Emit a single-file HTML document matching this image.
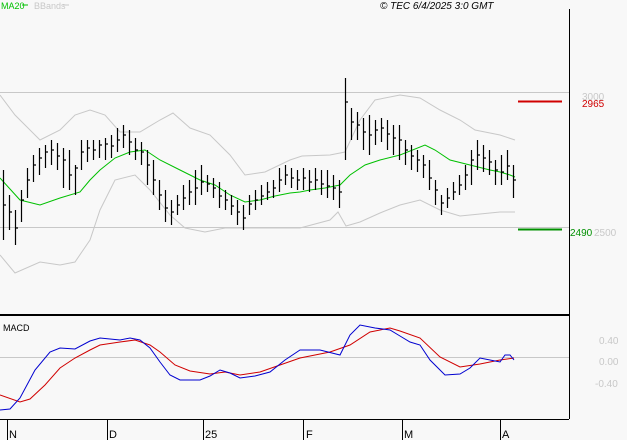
<!DOCTYPE html>
<html><head><meta charset="utf-8"><style>
html,body{margin:0;padding:0;background:#f8f8f8;}
svg{display:block;font-family:"Liberation Sans",sans-serif;}
</style></head><body>
<svg width="627" height="440" viewBox="0 0 627 440" xmlns="http://www.w3.org/2000/svg">
<rect width="627" height="440" fill="#f8f8f8"/>
<text x="1" y="9" font-size="9" fill="#00c000">MA20</text>
<line x1="22" y1="5" x2="28" y2="5" stroke="#00c000"/>
<text x="34" y="9" font-size="9" fill="#c8c8c8">BBands</text>
<line x1="63" y1="5" x2="69" y2="5" stroke="#c8c8c8"/>
<text x="380" y="9" font-size="10" font-style="italic" fill="#000">© TEC 6/4/2025 3:0 GMT</text>
<line x1="0" y1="92.5" x2="569" y2="92.5" stroke="#c8c8c8"/>
<line x1="0" y1="227.5" x2="569" y2="227.5" stroke="#c8c8c8"/>
<line x1="569.5" y1="9" x2="569.5" y2="419" stroke="#000"/>
<line x1="0" y1="315" x2="569" y2="315" stroke="#000" stroke-width="2"/>
<line x1="0" y1="419.5" x2="569" y2="419.5" stroke="#000"/>
<line x1="0" y1="357.5" x2="569" y2="357.5" stroke="#c8c8c8"/>
<line x1="518" y1="101.5" x2="562" y2="101.5" stroke="#d00000" stroke-width="2"/>
<line x1="518" y1="229.5" x2="562" y2="229.5" stroke="#009000" stroke-width="2"/>
<text x="582" y="100" font-size="10" fill="#c8c8c8">3000</text>
<text x="582" y="107" font-size="10" fill="#d00000">2965</text>
<text x="570" y="236" font-size="10" fill="#009000">2490</text>
<text x="594" y="236" font-size="10" fill="#c8c8c8">2500</text>
<text x="599" y="344" font-size="10" fill="#c8c8c8">0.40</text>
<text x="599" y="365" font-size="10" fill="#c8c8c8">0.00</text>
<text x="595" y="387" font-size="10" fill="#c8c8c8">-0.40</text>
<text x="3" y="331" font-size="9" fill="#000">MACD</text>
<g stroke="#000">
<line x1="7.5" y1="419" x2="7.5" y2="440"/><line x1="107.5" y1="419" x2="107.5" y2="440"/>
<line x1="203.5" y1="419" x2="203.5" y2="440"/><line x1="303.5" y1="419" x2="303.5" y2="440"/>
<line x1="402.5" y1="419" x2="402.5" y2="440"/><line x1="500.5" y1="419" x2="500.5" y2="440"/>
</g>
<g font-size="11" fill="#000">
<text x="9" y="438">N</text><text x="109" y="438">D</text><text x="205" y="438">25</text>
<text x="306" y="438">F</text><text x="404" y="438">M</text><text x="502" y="438">A</text>
</g>
<polyline fill="none" stroke="#c8c8c8" points="0,95 15,115 40,140 60,130 75,115 90,110 105,115 120,132 140,132 160,120 173,113 190,128 210,135 230,155 245,175 265,172 290,160 302,156 330,155 345,152 360,120 375,100 400,95 420,98 440,110 460,120 475,130 500,135 515,140"/>
<polyline fill="none" stroke="#c8c8c8" points="0,255 15,273 40,262 60,265 75,262 90,240 100,210 115,180 135,175 150,190 170,215 185,228 205,232 225,228 240,228 270,228 300,228 330,220 338,212 346,226 360,222 380,213 400,205 420,200 440,210 460,216 480,214 500,212 515,212"/>
<polyline fill="none" stroke="#00c000" points="0,178 20,200 40,205 60,198 80,192 90,180 100,170 115,158 130,152 145,150 160,160 180,170 200,180 215,185 230,195 245,202 260,200 275,196 290,193 300,192 310,190 325,188 340,185 350,175 365,165 380,160 400,155 425,145 435,150 450,160 470,165 490,170 500,172 510,175 515,177"/>
<path fill="none" stroke="#000" stroke-width="1.2" d="M3.5 170V240M4 205h2M9.5 195V230M10 212h2M15.5 210V245M16 228h2M21.5 190V222M22 200h2M27.5 168V198M28 180h2M33.5 155V182M34 165h2M39.5 148V175M40 158h2M45.5 145V168M46 152h2M51.5 140V165M52 150h2M57.5 143V170M58 156h2M63.5 148V188M64 160h2M69.5 150V190M70 175h2M75.5 165V195M76 168h2M81.5 140V170M82 152h2M87.5 140V162M88 148h2M93.5 140V160M94 150h2M99.5 140V158M100 145h2M105.5 138V160M106 144h2M111.5 135V158M112 146h2M117.5 128V152M118 140h2M123.5 125V148M124 135h2M129.5 130V155M130 142h2M135.5 138V160M136 150h2M141.5 142V165M142 152h2M147.5 150V185M148 165h2M153.5 160V195M154 180h2M159.5 180V210M160 195h2M165.5 190V222M166 208h2M171.5 200V225M172 212h2M177.5 195V215M178 205h2M183.5 185V210M184 198h2M189.5 180V205M190 192h2M195.5 170V205M196 188h2M201.5 165V195M202 182h2M207.5 175V192M208 184h2M213.5 178V198M214 188h2M219.5 182V208M220 196h2M225.5 190V210M226 200h2M231.5 195V215M232 206h2M237.5 200V225M238 212h2M243.5 205V230M244 218h2M249.5 195V215M250 204h2M255.5 190V210M256 200h2M261.5 185V205M262 196h2M267.5 182V200M268 192h2M273.5 180V198M274 188h2M279.5 168V192M280 180h2M285.5 165V185M286 175h2M291.5 168V188M292 178h2M297.5 170V190M298 180h2M303.5 168V190M304 178h2M309.5 170V192M310 182h2M315.5 168V190M316 180h2M321.5 170V195M322 184h2M327.5 170V198M328 186h2M333.5 175V200M334 188h2M339.5 180V208M340 192h2M345.5 78V160M346 102h2M351.5 108V140M352 122h2M357.5 112V140M358 125h2M363.5 118V150M364 132h2M369.5 115V155M370 135h2M375.5 120V145M376 130h2M381.5 118V142M382 128h2M387.5 120V150M388 134h2M393.5 125V155M394 138h2M399.5 125V160M400 140h2M405.5 140V165M406 150h2M411.5 145V170M412 156h2M417.5 150V172M418 160h2M423.5 155V178M424 165h2M429.5 160V190M430 178h2M435.5 180V205M436 190h2M441.5 195V215M442 203h2M447.5 188V208M448 198h2M453.5 182V200M454 192h2M459.5 175V195M460 185h2M465.5 165V190M466 175h2M471.5 150V185M472 160h2M477.5 140V170M478 155h2M483.5 145V172M484 158h2M489.5 150V175M490 162h2M495.5 160V185M496 170h2M501.5 155V185M502 172h2M507.5 150V180M508 166h2M513.5 165V198M514 180h2"/>
<polyline fill="none" stroke="#d00000" points="0,395 20,402 30,399 45,385 60,368 75,358 90,350 100,345 120,342 135,340 150,345 160,352 175,365 190,371 210,374 225,372 240,375 260,372 280,365 300,358 330,352 350,345 370,332 390,328 400,331 420,338 440,357 460,367 480,364 500,360 514,358"/>
<polyline fill="none" stroke="#0000d0" points="0,410 10,409 20,398 35,370 50,352 60,348 75,349 90,341 100,338 120,340 130,338 140,340 150,348 160,362 170,375 180,380 200,380 210,376 220,370 230,373 240,378 255,376 270,372 285,360 300,350 320,350 340,355 350,335 360,325 375,328 390,330 400,336 410,342 420,345 430,360 445,375 460,374 470,368 480,358 490,360 500,362 505,355 510,355 514,360"/>
</svg>
</body></html>
